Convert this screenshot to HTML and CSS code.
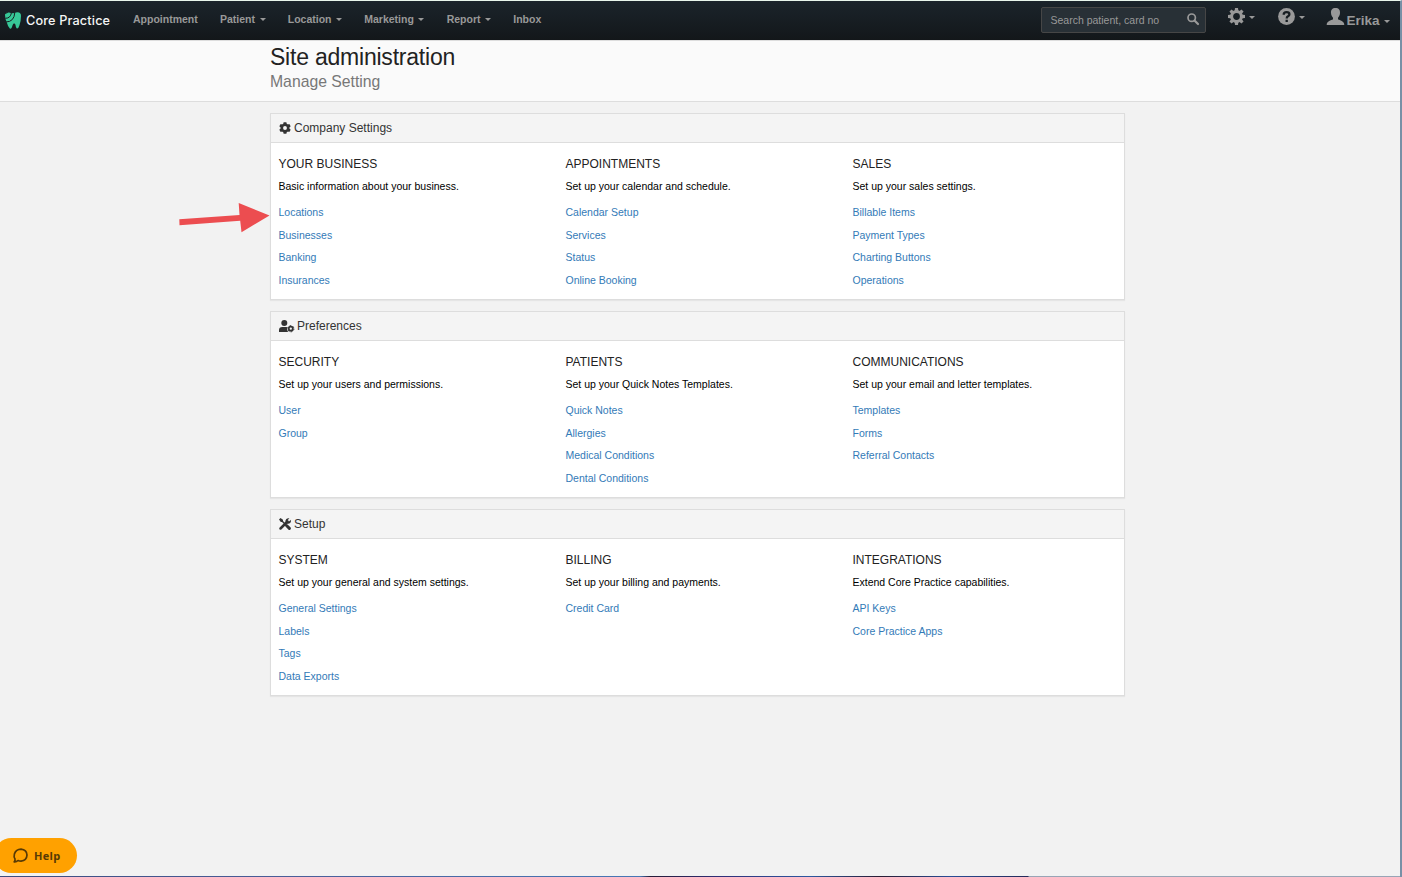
FILE: index.html
```html
<!DOCTYPE html>
<html lang="en">
<head>
<meta charset="utf-8">
<title>Site administration</title>
<link rel="stylesheet" href="styles.css">
</head>
<body>
<div class="app">
  <header class="navbar">
    <a class="brand">
      <svg class="brand-mark" viewBox="0 0 16 17">
        <path d="M0 3Q0 0 4 .5Q8 2 11 .4Q16-.5 16 4Q16 9 14.400 13.500Q13.300 17 11.800 16.500Q10.800 16 10.500 13Q10 11 8.300 11.800Q7.500 13 7 15Q6.300 17.300 4.800 16.500Q3 15 2 11Q0 7 0 3Z" fill="#37c898"/>
        <path d="M.3 6.300Q5.600 6.300 6.400.8M1 10Q9.200 9.800 9.800.5" fill="none" stroke="#171d21" stroke-width="1"/>
        <path d="M0 1.500Q2.500 1 3.300 0" fill="none" stroke="#171d21" stroke-width=".8"/>
      </svg>
      <span class="brand-name">Core Practice</span>
    </a>
    <nav class="menu">
      <a>Appointment</a>
      <a>Patient<i class="caret"></i></a>
      <a>Location<i class="caret"></i></a>
      <a>Marketing<i class="caret"></i></a>
      <a>Report<i class="caret"></i></a>
      <a>Inbox</a>
    </nav>
    <div class="search">
      <span>Search patient, card no</span>
      <svg class="search-icon" viewBox="0 0 12 12"><circle cx="4.700" cy="4.700" r="3.700" fill="none" stroke="#999" stroke-width="1.700"/><path d="M7.500 7.500L11 11" stroke="#999" stroke-width="2.200" stroke-linecap="round"/></svg>
    </div>
    <div class="tools">
      <a class="tool tool-gear">
        <svg class="tool-icon" viewBox="0 0 17 17"><g fill="#999"><path id="t" d="M7 0h3l.5 4h-4zM7 17h3l.5-4h-4z"/><use href="#t" transform="rotate(45 8.500 8.500)"/><use href="#t" transform="rotate(90 8.500 8.500)"/><use href="#t" transform="rotate(135 8.500 8.500)"/></g><circle cx="8.500" cy="8.500" r="4.900" fill="none" stroke="#999" stroke-width="3"/></svg><i class="caret"></i>
      </a>
      <a class="tool tool-help">
        <svg class="tool-icon" viewBox="0 0 17 17"><circle cx="8.500" cy="8.500" r="8.400" fill="#999"/><path d="M5.700 6.700Q5.700 4.200 8.600 4.200Q11.400 4.200 11.400 6.300Q11.400 7.500 10 8.300Q8.700 9 8.700 10.500M8.700 11.700V13.900" fill="none" stroke="#171d21" stroke-width="2.300"/></svg><i class="caret"></i>
      </a>
      <a class="tool tool-user">
        <svg class="tool-icon" viewBox="0 0 17 17"><path d="M8.500 0C11.800 0 13.200 2 13 5C12.900 7.500 11.600 9 11 9.800V11.300C12.800 12.500 17.300 13 17.300 17H-.3C-.3 13 4.200 12.500 6 11.300V9.800C5.400 9 4.100 7.500 4 5C3.800 2 5.200 0 8.500 0Z" fill="#999"/></svg><span class="user-name">Erika</span><i class="caret"></i>
      </a>
    </div>
  </header>

  <div class="page-head">
    <div class="container">
      <h1>Site administration</h1>
      <p>Manage Setting</p>
    </div>
  </div>

  <main class="container panels">
    <section class="panel">
      <h2><svg class="icon-gear" viewBox="0 0 12 12"><g fill="#333"><path id="g" d="M4.600.2h2.800l.5 3h-3.800zM4.600 11.800h2.800l.5-3h-3.800z"/><use href="#g" transform="rotate(60 6 6)"/><use href="#g" transform="rotate(120 6 6)"/></g><circle cx="6" cy="6" r="3.200" fill="none" stroke="#333" stroke-width="2.500"/></svg>Company Settings</h2>
      <div class="columns">
        <div class="column"><h3>YOUR BUSINESS</h3><p>Basic information about your business.</p><ul><li>Locations</li><li>Businesses</li><li>Banking</li><li>Insurances</li></ul></div>
        <div class="column"><h3>APPOINTMENTS</h3><p>Set up your calendar and schedule.</p><ul><li>Calendar Setup</li><li>Services</li><li>Status</li><li>Online Booking</li></ul></div>
        <div class="column"><h3>SALES</h3><p>Set up your sales settings.</p><ul><li>Billable Items</li><li>Payment Types</li><li>Charting Buttons</li><li>Operations</li></ul></div>
      </div>
    </section>
    <section class="panel">
      <h2><svg class="icon-users" viewBox="0 0 15 12"><circle cx="5.300" cy="3" r="3" fill="#333"/><path d="M0 12V10Q0 7 3.300 7H7.300L8.400 7.300Q7.700 8.500 8.300 9.800Q8.200 11.200 9.300 12Z" fill="#333"/><circle cx="11.800" cy="8.700" r="2" fill="none" stroke="#333" stroke-width="1.700"/><circle cx="11.800" cy="8.700" r="3.100" fill="none" stroke="#333" stroke-width="1" stroke-dasharray="1.700 1.546"/></svg>Preferences</h2>
      <div class="columns">
        <div class="column"><h3>SECURITY</h3><p>Set up your users and permissions.</p><ul><li>User</li><li>Group</li></ul></div>
        <div class="column"><h3>PATIENTS</h3><p>Set up your Quick Notes Templates.</p><ul><li>Quick Notes</li><li>Allergies</li><li>Medical Conditions</li><li>Dental Conditions</li></ul></div>
        <div class="column"><h3>COMMUNICATIONS</h3><p>Set up your email and letter templates.</p><ul><li>Templates</li><li>Forms</li><li>Referral Contacts</li></ul></div>
      </div>
    </section>
    <section class="panel">
      <h2><svg class="icon-tools" viewBox="0 0 12 12"><path d="M1.500 10.500L8.500 3.500" stroke="#333" stroke-width="2.500" stroke-linecap="round"/><path d="M10.400.3L8.600 2.200L9 3.200L10 3.500L11.800 1.700Q12.500 4.200 10.800 5.300Q9.300 6.200 7.700 5.400L6.600 4.300Q6 2.300 7.300 1Q8.600-.1 10.400.3Z" fill="#333"/><path d="M2.500 2.500L6.500 6.500" stroke="#333" stroke-width="1.500"/><path d="M0 1.500L1.500 0L4 1.800V3.200L3.200 4H1.800Z" fill="#333"/><path d="M7.500 7.500L10.400 10.400" stroke="#333" stroke-width="3" stroke-linecap="round"/></svg>Setup</h2>
      <div class="columns">
        <div class="column"><h3>SYSTEM</h3><p>Set up your general and system settings.</p><ul><li>General Settings</li><li>Labels</li><li>Tags</li><li>Data Exports</li></ul></div>
        <div class="column"><h3>BILLING</h3><p>Set up your billing and payments.</p><ul><li>Credit Card</li></ul></div>
        <div class="column"><h3>INTEGRATIONS</h3><p>Extend Core Practice capabilities.</p><ul><li>API Keys</li><li>Core Practice Apps</li></ul></div>
      </div>
    </section>
  </main>

  <svg class="arrow" viewBox="0 0 92 32"><path d="M.3 17.300L60.500 13L59.700 1L90.500 13.500L62.500 30.300L61.200 18.800L.5 23.200Z" fill="#ec4d50"/></svg>
  <button class="help" type="button"><svg class="help-icon" viewBox="0 0 15 15"><path d="M1.200 13.800Q2.300 12.600 2 11Q.6 8.800 1.400 6Q3 1.200 8 1.100Q13.700 1.600 14 7Q13.700 12.600 8 13.200Q6.300 13.200 5 12.500Q3.500 14 1.200 13.800Z" fill="none" stroke="#573a05" stroke-width="1.700" stroke-linejoin="round"/></svg>Help</button>
</div>
</body>
</html>
```

FILE: styles.css
```css
* { box-sizing: border-box; }
body { margin: 0; background: #f2f2f2; color: #222; font-family: "Liberation Sans", Arial, sans-serif; font-size: 10.5px; }
h1, h2, h3, p, ul { margin: 0; padding: 0; font-weight: normal; }
ul { list-style: none; }
svg { display: block; flex: none; overflow: visible; }

.app { position: relative; width: 1402px; height: 877px; overflow: hidden; border-top: 1px solid #e9f6ec; border-right: 2px solid #7890a6; }
.app::after { content: ""; position: absolute; left: 0; right: 0; bottom: 0; height: 1px; background: linear-gradient(90deg, #3c4c80 0, #4a5f9a 300px, #4777b5 640px, #251c38 650px, #302f78 720px, #2d58a0 810px, #2a1c32 880px, #294d96 950px, #252a58 1028px, #98a5b6 1029px); }

.navbar { display: flex; height: 39px; padding-left: 5px; background: linear-gradient(#1b242b, #13171a); color: #999; font-weight: bold; }
.brand { display: flex; width: 128px; padding-top: 11px; }
.brand-mark { width: 16px; height: 17px; }
.brand-name { margin-left: 5px; color: #f5f5f5; font: 500 12.7px/18px Inter, sans-serif; letter-spacing: .15px; white-space: nowrap; }
.menu { display: flex; gap: 22.2px; padding-top: 12px; line-height: 13px; white-space: nowrap; width: 908px; }
.menu a { display: flex; }
.caret { width: 0; height: 0; margin: 5px 0 0 4.6px; border: 3px solid transparent; border-top-color: #999; border-bottom: 0; }
.search { display: flex; align-items: center; justify-content: space-between; width: 165px; height: 26px; margin-top: 6px; padding: 0 6px 0 8.5px; background: #283036; border: 1px solid #464646; border-radius: 2px; font-weight: normal; white-space: nowrap; }
.search-icon { width: 12px; height: 12px; margin-top: -3px; }
.tools { display: flex; padding: 7px 0 0 22px; }
.tool { display: flex; }
.tool-icon { width: 17px; height: 17px; }
.tool .caret { margin: 8px 0 0 4px; }
.tool-gear { width: 49.5px; }
.tool-help { width: 49px; }
.user-name { margin-left: 3px; padding-top: 4px; font-size: 13.5px; line-height: 17px; }
.tool-user .caret { margin: 12px 0 0 4.5px; }

.page-head { height: 62px; background: #fafafa; border-bottom: 1px solid #ddd; border-top: 1px solid #ddd; }
.container { width: 855px; margin-left: 270px; }
.page-head h1 { padding-top: 3px; font-size: 23px; line-height: 26px; letter-spacing: -.22px; }
.page-head p { margin-top: 3px; color: #777; font-size: 15.75px; line-height: 18px; }

.panels { display: grid; grid-template-columns: 855px; gap: 11px; padding-top: 11px; }
.panel { height: 187px; background: #fff; border: 1px solid #ddd; box-shadow: 0 1px 1px rgba(0, 0, 0, .05); }
.panel h2 { display: flex; align-items: center; gap: 3.5px; height: 29px; padding-left: 7.5px; background: #f4f4f4; border-bottom: 1px solid #ddd; color: #333; font-size: 12px; }
.icon-gear, .icon-tools { width: 12px; height: 12px; }
.icon-users { width: 15px; height: 12px; }
.columns { display: grid; grid-template-columns: repeat(3, 287px); padding: 13px 0 0 7.5px; }
.column h3 { font-size: 12px; line-height: 16px; }
.column p { margin-top: 7px; color: #000; line-height: 15px; }
.column ul { margin-top: 7px; }
.column li { height: 22.6px; color: #337ab7; line-height: 22.6px; }

.arrow { position: absolute; left: 179px; top: 201px; width: 92px; height: 32px; }
.help { position: absolute; left: -6px; top: 837px; display: flex; align-items: center; gap: 6px; width: 83px; height: 35px; padding: 0 0 0 19px; border: 0; border-radius: 18px; background: #ffa100; color: #573a05; font: bold 11px "Open Sans", sans-serif; letter-spacing: .35px; }
.help-icon { width: 15px; height: 15px; }
```
